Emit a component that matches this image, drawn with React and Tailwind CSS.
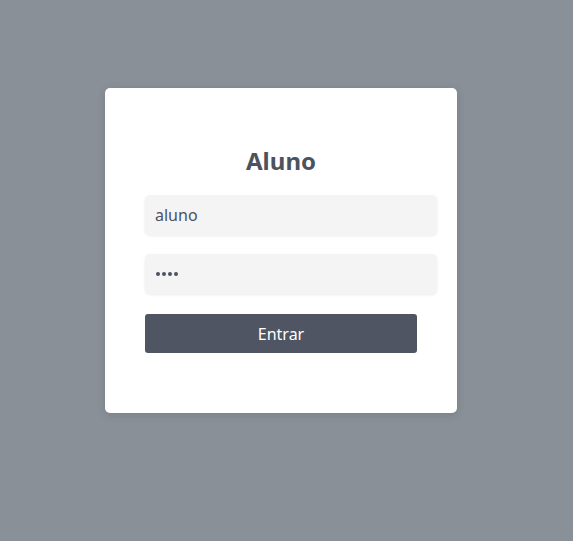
export default function App() {
  return (
    <div className="min-h-[541px] w-full bg-[#899098] flex justify-start pt-[88px] pl-[105px]" style={{}}>
      <div className="w-[352px] h-[325px] bg-white rounded-[5px] shadow-[0_2px_10px_rgba(0,0,0,0.12)] flex flex-col pl-10 pt-[57px] font-['Noto_Sans',sans-serif]">
        <h1 className="w-[272px] h-8 text-center text-[24px] leading-8 font-bold text-[#4b5260]">Aluno</h1>
        <div className="mt-[18px] w-[292px] h-10 bg-[#f4f4f4] rounded-[5px] shadow-[0_1px_3px_rgba(0,0,0,0.08)] flex items-center px-[10px] text-[16px] text-[#4b5260]">aluno</div>
        <div className="mt-[19px] w-[292px] h-10 bg-[#f4f4f4] rounded-[5px] shadow-[0_1px_3px_rgba(0,0,0,0.08)] flex items-center px-[11px] text-[#4b5260]">
          <span className="flex gap-[2px]">
            <span className="w-1 h-1 rounded-full bg-[#4b5260]"></span>
            <span className="w-1 h-1 rounded-full bg-[#4b5260]"></span>
            <span className="w-1 h-1 rounded-full bg-[#4b5260]"></span>
            <span className="w-1 h-1 rounded-full bg-[#4b5260]"></span>
          </span>
        </div>
        <button className="mt-5 w-[272px] h-[39px] bg-[#4f5562] rounded-[3px] text-white text-[16px] flex items-center justify-center">Entrar</button>
      </div>
    </div>
  );
}
